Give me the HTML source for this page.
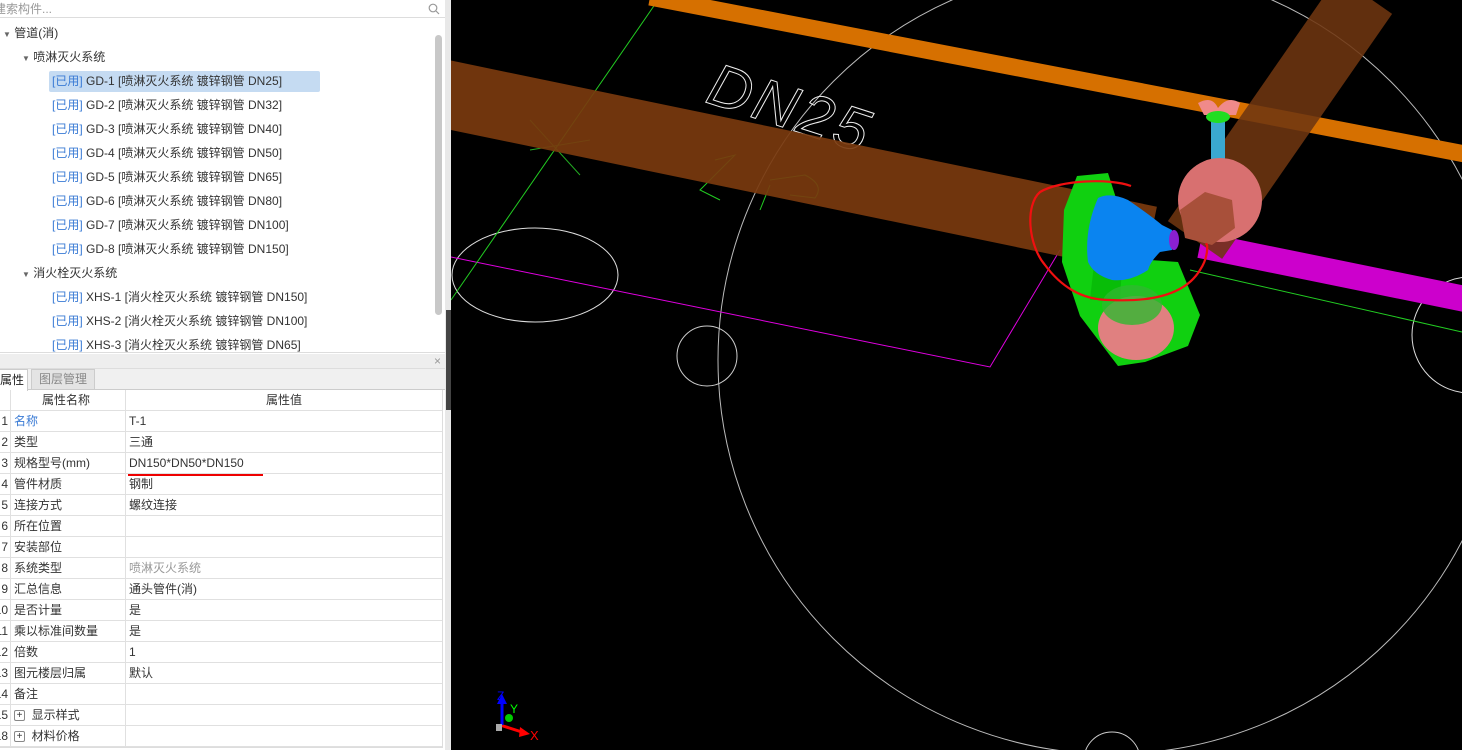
<!DOCTYPE html>
<html style="overflow:hidden"><head><meta charset="utf-8"><style>
*{margin:0;padding:0;box-sizing:border-box}
html,body{width:1462px;height:750px;overflow:hidden}
body{background:#fff;font-family:"Liberation Sans","Noto Sans CJK SC",sans-serif;font-size:12px;color:#333;position:relative}
.abs{position:absolute;white-space:nowrap}
.u{color:#3a7bd5}
.row{position:absolute;left:0;width:443px;height:21px;border-bottom:1px solid #e0e0e0;line-height:20px}
.row span{position:absolute}
.i{left:-8px;width:16px;text-align:right;overflow:hidden}
.n{left:14px}
.v{left:129px}
</style></head><body>
<div class="abs" style="left:0;top:0;width:445px;height:18px;border-bottom:1px solid #ddd"></div>
<div class="abs" style="left:-6px;top:0;height:18px;line-height:18px;color:#999">建索构件...</div>
<svg class="abs" style="left:428px;top:3px" width="12" height="12"><circle cx="5" cy="5" r="3.8" fill="none" stroke="#999" stroke-width="1.2"/><line x1="8" y1="8" x2="11" y2="11" stroke="#999" stroke-width="1.2"/></svg>
<div class="abs" style="left:3px;top:25px;line-height:16px"><span style="font-size:8px;color:#666">▼</span> 管道(消)</div>
<div class="abs" style="left:22px;top:49px;line-height:16px"><span style="font-size:8px;color:#666">▼</span> 喷淋灭火系统</div>
<div class="abs" style="left:49px;top:71px;width:271px;height:21px;background:#c5dbf2;border-radius:2px"></div>
<div class="abs" style="left:52px;top:73px;line-height:16px"><span class="u">[已用]</span> GD-1 [喷淋灭火系统 镀锌钢管 DN25]</div>
<div class="abs" style="left:52px;top:97px;line-height:16px"><span class="u">[已用]</span> GD-2 [喷淋灭火系统 镀锌钢管 DN32]</div>
<div class="abs" style="left:52px;top:121px;line-height:16px"><span class="u">[已用]</span> GD-3 [喷淋灭火系统 镀锌钢管 DN40]</div>
<div class="abs" style="left:52px;top:145px;line-height:16px"><span class="u">[已用]</span> GD-4 [喷淋灭火系统 镀锌钢管 DN50]</div>
<div class="abs" style="left:52px;top:169px;line-height:16px"><span class="u">[已用]</span> GD-5 [喷淋灭火系统 镀锌钢管 DN65]</div>
<div class="abs" style="left:52px;top:193px;line-height:16px"><span class="u">[已用]</span> GD-6 [喷淋灭火系统 镀锌钢管 DN80]</div>
<div class="abs" style="left:52px;top:217px;line-height:16px"><span class="u">[已用]</span> GD-7 [喷淋灭火系统 镀锌钢管 DN100]</div>
<div class="abs" style="left:52px;top:241px;line-height:16px"><span class="u">[已用]</span> GD-8 [喷淋灭火系统 镀锌钢管 DN150]</div>
<div class="abs" style="left:22px;top:265px;line-height:16px"><span style="font-size:8px;color:#666">▼</span> 消火栓灭火系统</div>
<div class="abs" style="left:52px;top:289px;line-height:16px"><span class="u">[已用]</span> XHS-1 [消火栓灭火系统 镀锌钢管 DN150]</div>
<div class="abs" style="left:52px;top:313px;line-height:16px"><span class="u">[已用]</span> XHS-2 [消火栓灭火系统 镀锌钢管 DN100]</div>
<div class="abs" style="left:52px;top:337px;line-height:16px;height:15px;overflow:hidden"><span class="u">[已用]</span> XHS-3 [消火栓灭火系统 镀锌钢管 DN65]</div>
<div class="abs" style="left:435px;top:35px;width:7px;height:280px;background:#c8c8c8;border-radius:4px"></div>
<div class="abs" style="left:0;top:352px;width:445px;height:1px;background:#ddd"></div>
<div class="abs" style="left:0;top:354px;width:445px;height:15px;background:#eeeeee;border-bottom:1px solid #ddd"></div>
<div class="abs" style="left:434px;top:354px;color:#999;font-size:12px;line-height:15px">×</div>
<div class="abs" style="left:0;top:369px;width:445px;height:21px;background:#f0f0f0;border-bottom:1px solid #ccc"></div>
<div class="abs" style="left:-5px;top:369px;width:33px;height:22px;background:#fff;border:1px solid #ccc;border-bottom:none;line-height:20px;padding-left:4px;color:#222">属性</div>
<div class="abs" style="left:31px;top:369px;width:64px;height:21px;background:#e4e4e4;border:1px solid #ccc;line-height:19px;text-align:center;color:#888">图层管理</div>
<div class="abs" style="left:0;top:390px;width:443px;height:358px;border-right:1px solid #ddd;border-bottom:1px solid #ddd;overflow:hidden">
<div class="row" style="top:0"><span style="left:42px">属性名称</span><span style="left:266px">属性值</span></div>
<div class="row" style="top:21px"><span class="i">1</span><span class="n u">名称</span><span class="v">T-1</span></div>
<div class="row" style="top:42px"><span class="i">2</span><span class="n">类型</span><span class="v">三通</span></div>
<div class="row" style="top:63px"><span class="i">3</span><span class="n">规格型号(mm)</span><span class="v">DN150*DN50*DN150</span></div>
<div class="row" style="top:84px"><span class="i">4</span><span class="n">管件材质</span><span class="v">钢制</span></div>
<div class="row" style="top:105px"><span class="i">5</span><span class="n">连接方式</span><span class="v">螺纹连接</span></div>
<div class="row" style="top:126px"><span class="i">6</span><span class="n">所在位置</span></div>
<div class="row" style="top:147px"><span class="i">7</span><span class="n">安装部位</span></div>
<div class="row" style="top:168px"><span class="i">8</span><span class="n">系统类型</span><span class="v" style="color:#999">喷淋灭火系统</span></div>
<div class="row" style="top:189px"><span class="i">9</span><span class="n">汇总信息</span><span class="v">通头管件(消)</span></div>
<div class="row" style="top:210px"><span class="i">10</span><span class="n">是否计量</span><span class="v">是</span></div>
<div class="row" style="top:231px"><span class="i">11</span><span class="n">乘以标准间数量</span><span class="v">是</span></div>
<div class="row" style="top:252px"><span class="i">12</span><span class="n">倍数</span><span class="v">1</span></div>
<div class="row" style="top:273px"><span class="i">13</span><span class="n">图元楼层归属</span><span class="v">默认</span></div>
<div class="row" style="top:294px"><span class="i">14</span><span class="n">备注</span></div>
<div class="row" style="top:315px"><span class="i">15</span><span class="n"><span style="position:static;display:inline-block;width:11px;height:11px;border:1px solid #888;border-radius:2px;font-size:10px;line-height:9px;text-align:center;vertical-align:middle">+</span>&nbsp; 显示样式</span></div>
<div class="row" style="top:336px"><span class="i">18</span><span class="n"><span style="position:static;display:inline-block;width:11px;height:11px;border:1px solid #888;border-radius:2px;font-size:10px;line-height:9px;text-align:center;vertical-align:middle">+</span>&nbsp; 材料价格</span></div>
<div style="position:absolute;left:10px;top:0;width:1px;height:358px;background:#e0e0e0"></div>
<div style="position:absolute;left:125px;top:0;width:1px;height:358px;background:#e0e0e0"></div>
</div>
<div class="abs" style="left:128px;top:474px;width:135px;height:2px;background:#e00"></div>
<div class="abs" style="left:445px;top:0;width:6px;height:750px;background:#e8e8e8"></div>
<div class="abs" style="left:446px;top:310px;width:5px;height:100px;background:#444"></div>
<svg class="abs" style="left:451px;top:0;overflow:hidden" width="1011" height="750" viewBox="451 0 1011 750">
<rect x="451" y="0" width="1011" height="750" fill="#000"/>
<g fill="none" stroke-width="1">
<circle cx="1112" cy="360" r="394" stroke="#bbb"/>
<ellipse cx="535" cy="275" rx="83" ry="47" stroke="#ddd"/>
<circle cx="707" cy="356" r="30" stroke="#ccc"/>
<circle cx="1112" cy="760" r="28" stroke="#ccc"/>
<circle cx="1470" cy="335" r="58" stroke="#ddd"/>
<polyline points="451,257 990,367 1060,250" stroke="#e000e0"/>
<line x1="658" y1="0" x2="451" y2="300" stroke="#2c2"/>
<line x1="1190" y1="270" x2="1462" y2="332" stroke="#2c2"/>
<line x1="530" y1="120" x2="580" y2="175" stroke="#2a2"/><line x1="530" y1="150" x2="590" y2="140" stroke="#2a2"/>
<polyline points="715,160 735,155 700,190 720,200" stroke="#2c2"/>
<path d="M770,185 L760,210 M770,180 L805,175 Q825,185 815,198 L790,195" stroke="#2c2"/>
<text x="705" y="135" transform="rotate(18 810 115)" font-family="Liberation Sans" font-size="60" font-style="italic" fill="none" stroke="#eee" stroke-width="1" letter-spacing="4">DN25</text>
</g>
<line x1="650" y1="-3" x2="1470" y2="155" stroke="#d67000" stroke-width="17"/>
<line x1="1200" y1="245" x2="1470" y2="300" stroke="#cc00cc" stroke-width="26"/>
<line x1="1365" y1="-5" x2="1195" y2="240" stroke="#6e3510" stroke-width="66" stroke-opacity="0.88"/>
<line x1="440" y1="93" x2="1150" y2="240" stroke="#7a3a0e" stroke-width="68" stroke-opacity="0.92"/>
<rect x="1211" y="118" width="14" height="50" fill="#3aa8d0"/>
<path d="M1198,103 Q1212,95 1218,108 Q1228,95 1240,103 L1236,115 L1204,115Z" fill="#f08a8a"/>
<ellipse cx="1218" cy="117" rx="12" ry="6" fill="#2d2"/>
<ellipse cx="1218" cy="167" rx="12" ry="7" fill="#2d2"/>
<circle cx="1220" cy="200" r="42" fill="#d87070"/>
<polygon points="1180,210 1205,192 1232,200 1235,228 1212,245 1185,238" fill="#a8503a"/>
<polygon points="1077,176 1108,173 1116,198 1122,258 1178,262 1200,315 1188,346 1145,362 1118,366 1080,316 1062,262 1064,210" fill="#10d010"/>
<path d="M1100,210 L1125,215 L1120,300 L1090,300Z" fill="#0a0" opacity="0.5"/>
<ellipse cx="1136" cy="328" rx="38" ry="32" fill="#e08080"/>
<ellipse cx="1132" cy="305" rx="30" ry="20" fill="#30b830" opacity="0.8"/>
<path d="M1098,198 Q1110,192 1128,200 Q1150,215 1162,225 L1172,230 L1172,250 L1160,252 Q1150,262 1148,270 Q1130,282 1112,280 Q1094,275 1088,262 Q1084,230 1098,198Z" fill="#0a84f0"/>
<ellipse cx="1174" cy="240" rx="5" ry="10" fill="#8a20d0"/>
<path d="M1131,186 C1110,178 1060,180 1040,192 C1025,205 1028,245 1045,265 C1060,285 1080,300 1110,300 C1150,302 1185,295 1200,270 C1210,255 1207,240 1206,245" fill="none" stroke="#f01010" stroke-width="2.2"/>
<line x1="500" y1="725" x2="525" y2="733" stroke="#f00" stroke-width="3"/><polygon points="520,727 530,734 519,737" fill="#f00"/>
<text x="530" y="740" fill="#f00" font-size="13">X</text>
<line x1="502" y1="725" x2="502" y2="700" stroke="#00f" stroke-width="3"/><polygon points="497,704 502,694 507,704" fill="#00f"/>
<text x="497" y="700" fill="#00f" font-size="12">Z</text>
<circle cx="509" cy="718" r="4" fill="#0c0"/><text x="510" y="713" fill="#0f0" font-size="12">Y</text>
<rect x="496" y="724" width="6" height="7" fill="#aaa"/>
</svg>
</body></html>
